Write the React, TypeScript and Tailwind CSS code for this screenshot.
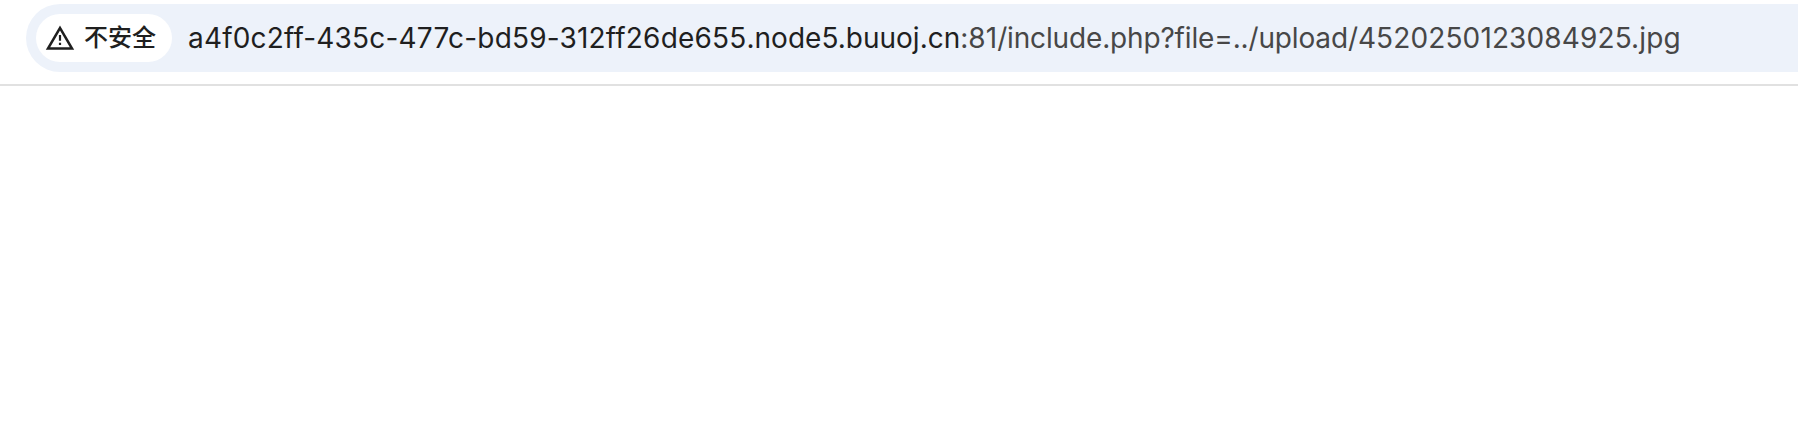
import React from "react";

export default function App() {
  return (
    <div className="h-[436px] w-full overflow-hidden bg-white font-['Inter','Noto_Sans_CJK_SC',sans-serif]">
      <header className="h-[86px] border-b-2 border-[#e1e1e1] pt-1 pl-[26px]">
        <div className="flex h-[68px] items-center rounded-l-full bg-[#edf2fa] pl-[10px]">
          <div className="flex h-12 w-[136px] shrink-0 items-center rounded-full bg-white pl-[9px]">
            <svg className="size-[30px] shrink-0" viewBox="0 0 30 30" fill="#1f1f1f">
              <path fillRule="evenodd" d="M15 2.4L29.2 26.8H.8ZM5.2 24.2H24.8L15 7.5Z" />
              <path d="M13.9 12h2.2v5.8h-2.2zM13.9 19.8h2.2v2.2h-2.2z" />
            </svg>
            <span className="ml-[9px] text-[24px] font-medium leading-none whitespace-nowrap text-[#1f1f1f]">不安全</span>
          </div>
          <div className="ml-4 text-[28px] leading-none whitespace-nowrap text-[#474747]">
            <span className="text-[#1f1f1f]">
              <span className="tracking-[0.19px]">a4f0c2ff-435c-477c-bd59-312ff26de655</span>
              <span className="tracking-[0.01px]">.node5.buuoj.cn</span>
            </span>
            <span className="tracking-[0.02px]">:81</span>
            <span className="tracking-[-0.15px]">/include.php?file=../upload/</span>
            <span className="tracking-[0.13px]">4520250123084925.jpg</span>
          </div>
        </div>
      </header>
      <main />
    </div>
  );
}
